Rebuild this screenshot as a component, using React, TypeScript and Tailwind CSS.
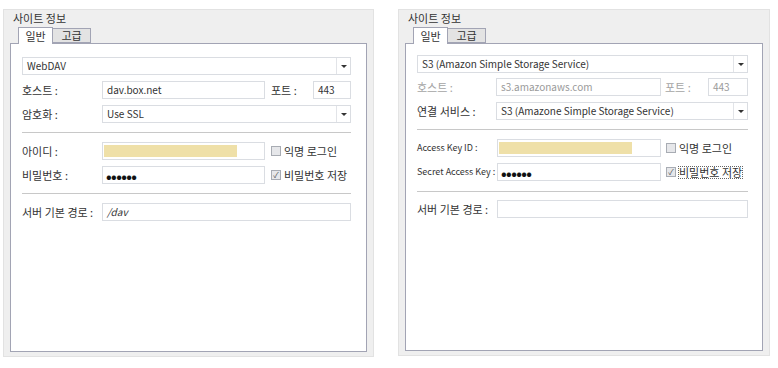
import React from "react";

const font = { fontFamily: '"Noto Sans CJK KR", "Noto Sans", sans-serif' };

function Arrow() {
  return (
    <div className="flex h-full w-[14px] items-center justify-center border-l border-[#e2e4e8]">
      <div className="h-0 w-0 border-x-[3px] border-t-[3px] border-x-transparent border-t-[#333]" />
    </div>
  );
}

function Box({
  w,
  value,
  combo,
  muted,
  italic,
  yellow,
  dots,
}: {
  w: string;
  value?: string;
  combo?: boolean;
  muted?: boolean;
  italic?: boolean;
  yellow?: boolean;
  dots?: boolean;
}) {
  return (
    <div className={`${w} flex h-[18px] items-center border border-[#dadde2] bg-white`}>
      <div className="flex h-full flex-1 items-center pl-[3px]">
        {yellow && <div className="-ml-[2px] h-[12px] w-[133px] bg-[#efe0a8]" />}
        {dots && (
          <span className="text-[15px] font-bold leading-none tracking-[-0.6px] text-[#111]">••••••</span>
        )}
        {value && (
          <span
            className={`pl-px text-[10px] ${muted ? "text-[#9a9a9a]" : "text-[#333]"} ${italic ? "italic" : ""} leading-none`}
          >
            {value}
          </span>
        )}
      </div>
      {combo && <Arrow />}
    </div>
  );
}

function Check({ checked, label, focus }: { checked?: boolean; label: string; focus?: boolean }) {
  return (
    <div className="flex items-center gap-[3px]">
      <div className="flex h-[10px] w-[10px] items-center justify-center border border-[#a8acb3] bg-[#e6e7ea]">
        {checked && <span className="text-[8px] leading-none text-[#555]">✓</span>}
      </div>
      <span
        className={`text-[11px] leading-none text-[#333] ${focus ? "outline outline-1 outline-dotted outline-[#666]" : ""}`}
      >
        {label}
      </span>
    </div>
  );
}

function Label({ text, w, muted, small }: { text: string; w: string; muted?: boolean; small?: boolean }) {
  return (
    <div className={`${w} shrink-0 ${small ? "text-[9px]" : "text-[11px]"} ${muted ? "text-[#a4a4a4]" : "text-[#333]"}`}>
      {text}
    </div>
  );
}

function Sep() {
  return <div className="h-[2px] border-t border-[#c8c8c8] border-b-white" />;
}

function Frame({ children, w, h, panelH }: { children: React.ReactNode; w: string; h: string; panelH: string }) {
  return (
    <div className={`${w} ${h} flex flex-col border border-[#e2e2e2] bg-[#efefef]`}>
      <div className="h-[17px] pl-[9px] pt-[3px] text-[11px] leading-none text-[#333]">사이트 정보</div>
      <div className="flex h-[16px] items-end pl-[14px]">
        <div className="relative z-10 -mb-px flex h-[17px] w-[35px] items-center justify-center border border-b-0 border-[#a2a4b4] bg-white text-[11px] text-[#333]">
          일반
        </div>
        <div className="flex h-[15px] w-[38px] items-center justify-center border border-l-0 border-[#a2a4b4] bg-[#e3e3e3] text-[11px] text-[#333]">
          고급
        </div>
      </div>
      <div className={`mx-[6px] ${panelH} border border-[#a2a4b4] bg-white`}>{children}</div>
    </div>
  );
}

export default function App() {
  return (
    <div className="flex h-[368px] w-[778px] bg-white pl-[3px] pt-[9px]" style={font}>
      <Frame w="w-[371px]" h="h-[348px]" panelH="h-[309px]">
        <div className="flex flex-col pl-[11px] pr-[15px] pt-[13px]">
          <Box w="w-full" value="WebDAV" combo />
          <div className="mt-[6px] flex items-center">
            <Label text="호스트 :" w="w-[80px]" />
            <Box w="w-[163px]" value="dav.box.net" />
            <Label text="포트 :" w="w-[48px] pl-[6px]" />
            <Box w="flex-1" value="443" />
          </div>
          <div className="mt-[6px] flex items-center">
            <Label text="암호화 :" w="w-[80px]" />
            <Box w="flex-1" value="Use SSL" combo />
          </div>
          <div className="mb-[8px] mt-[9px]">
            <Sep />
          </div>
          <div className="flex items-center">
            <Label text="아이디 :" w="w-[80px]" />
            <Box w="w-[163px]" yellow />
            <div className="pl-[6px]">
              <Check label="익명 로그인" />
            </div>
          </div>
          <div className="mt-[6px] flex items-center">
            <Label text="비밀번호 :" w="w-[80px]" />
            <Box w="w-[163px]" dots />
            <div className="pl-[6px]">
              <Check checked label="비밀번호 저장" />
            </div>
          </div>
          <div className="mb-[8px] mt-[9px]">
            <Sep />
          </div>
          <div className="flex items-center">
            <Label text="서버 기본 경로 :" w="w-[80px]" />
            <Box w="flex-1" value="/dav" italic />
          </div>
        </div>
      </Frame>
      <div className="ml-[24px]">
        <Frame w="w-[372px]" h="h-[347px]" panelH="h-[308px]">
          <div className="flex flex-col pl-[11px] pr-[14px] pt-[11px]">
            <Box w="w-full" value="S3 (Amazon Simple Storage Service)" combo />
            <div className="mt-[5px] flex items-center">
              <Label text="호스트 :" w="w-[79px]" muted />
              <Box w="w-[165px]" value="s3.amazonaws.com" muted />
              <Label text="포트 :" w="w-[47px] pl-[4px]" muted />
              <Box w="flex-1" value="443" muted />
            </div>
            <div className="mt-[6px] flex items-center">
              <Label text="연결 서비스 :" w="w-[79px]" />
              <Box w="flex-1" value="S3 (Amazone Simple Storage Service)" combo />
            </div>
            <div className="mb-[8px] mt-[9px]">
              <Sep />
            </div>
            <div className="flex items-center">
              <Label text="Access Key ID :" w="w-[80px]" small />
              <Box w="w-[164px]" yellow />
              <div className="pl-[5px]">
                <Check label="익명 로그인" />
              </div>
            </div>
            <div className="mt-[6px] flex items-center">
              <Label text="Secret Access Key :" w="w-[80px]" small />
              <Box w="w-[164px]" dots />
              <div className="pl-[5px]">
                <Check checked label="비밀번호 저장" focus />
              </div>
            </div>
            <div className="mb-[7px] mt-[10px]">
              <Sep />
            </div>
            <div className="flex items-center">
              <Label text="서버 기본 경로 :" w="w-[80px]" />
              <Box w="flex-1" />
            </div>
          </div>
        </Frame>
      </div>
    </div>
  );
}
